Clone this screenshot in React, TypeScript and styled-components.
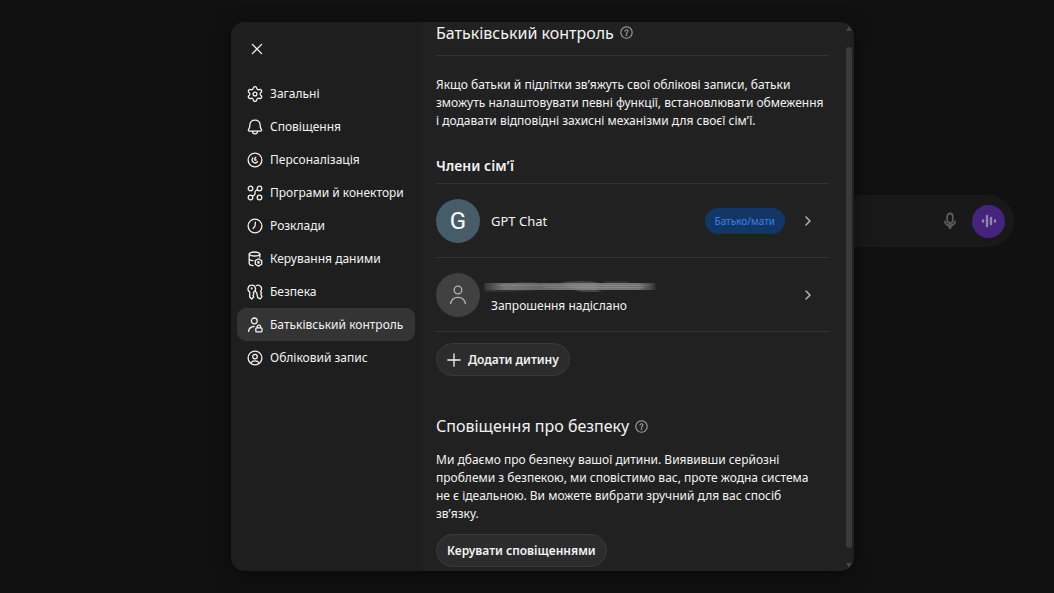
import React from "react";
import styled, { createGlobalStyle } from "styled-components";

const GlobalStyle = createGlobalStyle`
  *, *::before, *::after { box-sizing: border-box; }
  body {
    margin: 0;
    background: #111111;
    color: #f3f3f3;
    font-family: "Noto Sans", "Open Sans", sans-serif;
    font-size: 12px;
    line-height: 18px;
  }
  button { font: inherit; color: inherit; border: 0; background: none; padding: 0; cursor: pointer; }
  h1, h2, h3, p, ul { margin: 0; padding: 0; }
  ul { list-style: none; }
`;

const Page = styled.div`
  position: relative;
  min-height: 100vh;
  padding-top: 195px;
  overflow: hidden;
`;

const Composer = styled.div`
  display: flex;
  align-items: center;
  justify-content: flex-end;
  gap: 14px;
  width: 60%;
  height: 52px;
  margin: 0 40px 0 auto;
  padding-right: 9px;
  border-radius: 26px;
  background: #191919;
`;

const MicButton = styled.button`
  display: flex;
  color: #5c5c5c;
`;

const VoiceButton = styled.button`
  display: flex;
  align-items: center;
  justify-content: center;
  width: 33px;
  height: 33px;
  border-radius: 50%;
  background: #46237c;
  color: #9484ae;
`;

const Overlay = styled.div`
  position: absolute;
  inset: 0;
  display: flex;
  align-items: center;
  justify-content: center;
  padding: 22px 16px 22px 47px;
`;

const Dialog = styled.section`
  display: flex;
  width: 100%;
  max-width: 623px;
  height: 100%;
  border-radius: 14px;
  overflow: hidden;
  background: #212121;
  box-shadow: 0 4px 20px rgba(0, 0, 0, 0.5);
`;

const Sidebar = styled.nav`
  flex: 0 0 190px;
  padding: 17px 6px 0;
  background: #1e1e1e;
`;

const CloseButton = styled.button`
  display: flex;
  align-items: center;
  justify-content: center;
  width: 20px;
  height: 20px;
  margin: 0 0 18px 10px;
`;

const NavItem = styled.button<{ $active?: boolean }>`
  display: flex;
  align-items: center;
  gap: 7px;
  width: 100%;
  height: 33px;
  padding-left: 10px;
  border-radius: 9px;
  white-space: nowrap;
  text-align: left;
  background: ${(p) => (p.$active ? "#343434" : "transparent")};

  svg { flex: none; }
`;

const Content = styled.main`
  flex: 1;
  min-width: 0;
  padding: 0 17px 0 15px;
  overflow: hidden;
`;

const TitleRow = styled.header<{ $ruled?: boolean }>`
  display: flex;
  align-items: center;
  gap: 6px;
  height: ${(p) => (p.$ruled ? "34px" : "24px")};
  padding-bottom: ${(p) => (p.$ruled ? "12px" : "0")};
  border-bottom: ${(p) => (p.$ruled ? "1px solid #333333" : "0")};
`;

const Title = styled.h2`
  font-size: 16px;
  line-height: 22px;
  font-weight: 400;
`;

const HelpButton = styled.button`
  display: flex;
  color: #a6a6a6;
`;

const Paragraph = styled.p<{ $top: number }>`
  margin-top: ${(p) => p.$top}px;
`;

const SubTitle = styled.h3`
  margin-top: 26px;
  padding-bottom: 7px;
  border-bottom: 1px solid #333333;
  font-size: 14px;
  line-height: 20px;
  font-weight: 600;
`;

const Member = styled.li`
  border-bottom: 1px solid #333333;
`;

const MemberButton = styled.button`
  display: flex;
  align-items: center;
  width: 100%;
  height: 73px;
  padding-right: 17px;
  text-align: left;
`;

const Avatar = styled.span<{ $color: string }>`
  display: flex;
  flex: none;
  align-items: center;
  justify-content: center;
  width: 44px;
  height: 44px;
  margin-right: 11px;
  border-radius: 50%;
  background: ${(p) => p.$color};
  color: #ffffff;
  font-family: Roboto, sans-serif;
  font-size: 24px;
`;

const MemberText = styled.span`
  display: flex;
  flex: 1;
  flex-direction: column;
`;

const MemberName = styled.span`
  font-size: 13px;
`;

const Redacted = styled.svg`
  margin: 5px 0 3px -7px;
`;

const Badge = styled.span`
  padding: 4px 10px;
  margin-right: 19px;
  border-radius: 13px;
  background: #123665;
  color: #3284f0;
  font-size: 10px;
`;

const PillButton = styled.button`
  display: inline-flex;
  align-items: center;
  gap: 7px;
  height: 33px;
  margin-top: 11px;
  padding: 0 10px;
  border: 1px solid #3b3b3b;
  border-radius: 17px;
  background: #2c2c2c;
  font-weight: 600;
`;

const SafetySection = styled.section`
  margin-top: 38px;
`;

const ScrollTrack = styled.div`
  display: flex;
  flex: 0 0 8px;
  flex-direction: column;
  align-items: center;
  padding: 4px 2px 3px 0;
  color: #444444;

  svg { flex: none; }
`;

const ScrollThumb = styled.div`
  flex: 1;
  width: 6px;
  margin: 16px 0 15px;
  border-radius: 3px;
  background: #3a3a3a;
`;

const Icon = ({ size = 16, children }: { size?: number; children: React.ReactNode }) => (
  <svg width={size} height={size} viewBox="0 0 16 16" fill="none" stroke="currentColor"
    strokeWidth="1.300" strokeLinecap="round" strokeLinejoin="round" aria-hidden="true">
    {children}
  </svg>
);

const navItems: { label: string; active?: boolean; icon: React.ReactNode }[] = [
  {
    label: "Загальні",
    icon: (
      <>
        <g transform="translate(-0.880 -0.880) scale(0.740)" strokeWidth="1.750">
          <path d="M9.671 4.136a2.34 2.34 0 0 1 4.659 0 2.34 2.34 0 0 0 3.319 1.915 2.34 2.34 0 0 1 2.33 4.033 2.34 2.34 0 0 0 0 3.831 2.34 2.34 0 0 1-2.33 4.033 2.34 2.34 0 0 0-3.319 1.915 2.34 2.34 0 0 1-4.659 0 2.34 2.34 0 0 0-3.32-1.915 2.34 2.34 0 0 1-2.33-4.033 2.34 2.34 0 0 0 0-3.831A2.34 2.34 0 0 1 6.35 6.051a2.34 2.34 0 0 0 3.319-1.915" />
          <circle cx="12" cy="12" r="2.600" />
        </g>
      </>
    ),
  },
  {
    label: "Сповіщення",
    icon: (
      <>
        <path d="M8 1.200C4.900 1.200 3 3.300 2.800 6.200L2.600 8.400L1.500 10.700Q1 12.100 2.400 12.100H13.600Q15 12.100 14.500 10.700L13.400 8.400L13.200 6.200C13 3.300 11.100 1.200 8 1.200Z" />
        <path d="M5.300 12.400Q5.700 14.800 8 14.800T10.700 12.400" />
      </>
    ),
  },
  {
    label: "Персоналізація",
    icon: (
      <>
        <circle cx="8" cy="8" r="6.900" />
        <path d="M5.800 6A3 3 0 1 0 10.600 9.600" />
        <path d="M8.800 5.200Q7.200 6.400 7.900 8H9.200" />
      </>
    ),
  },
  {
    label: "Програми й конектори",
    icon: (
      <>
        <circle cx="3.500" cy="3.500" r="2.300" />
        <circle cx="12.500" cy="3.500" r="2.300" />
        <circle cx="3.500" cy="12.500" r="2.300" />
        <circle cx="12.500" cy="12.500" r="2.300" />
        <path d="M10.500 4.800L8.700 5.800Q8 6.200 8 7V8.800Q8 9.600 7.300 10L5.500 11.200" />
      </>
    ),
  },
  {
    label: "Розклади",
    icon: (
      <>
        <circle cx="8" cy="8" r="6.900" />
        <path d="M8.400 4.200L8 8.200L6.100 10.500" />
      </>
    ),
  },
  {
    label: "Керування даними",
    icon: (
      <>
        <ellipse cx="7.500" cy="3" rx="5.300" ry="2" />
        <path d="M2.200 3V12.700Q2.600 14.400 6 14.700M2.200 7.900Q2.800 9.400 6 9.700M12.800 3V6.300" />
        <path d="M11.500 7.800L14.700 9.600V13.300L11.500 15.100L8.300 13.300V9.600Z" />
        <circle cx="11.500" cy="11.450" r="0.700" />
      </>
    ),
  },
  {
    label: "Безпека",
    icon: (
      <>
        <path d="M4.700 1.200A3.700 3.700 0 0 0 2.700 8V13L4.700 15L6.700 13L5.900 11.500L6.900 10L6.300 8.300A3.700 3.700 0 0 0 4.700 1.200Z" />
        <circle cx="4.700" cy="4.400" r="0.400" />
        <path d="M9.300 1.500A3.700 3.700 0 0 1 13.500 7.400L14.600 8.600L13.800 10.200L14.900 12.600L13.300 14.800L10.700 13.600L9.700 8.700Q8.200 7.800 8.300 6" />
      </>
    ),
  },
  {
    label: "Батьківський контроль",
    active: true,
    icon: (
      <>
        <circle cx="7.300" cy="3.900" r="2.900" />
        <path d="M1.500 14.400Q2.200 9.700 7 9.500" />
        <rect x="8.800" y="10.900" width="6.200" height="4" rx="0.900" />
        <path d="M10.200 10.700V9.900A1.700 1.700 0 0 1 13.600 9.900V10.700" />
      </>
    ),
  },
  {
    label: "Обліковий запис",
    icon: (
      <>
        <circle cx="8" cy="8" r="6.900" />
        <circle cx="8" cy="6.600" r="2.300" />
        <path d="M3.900 13Q5.100 10.900 8 10.900T12.100 13" />
      </>
    ),
  },
];

const Help = ({ label }: { label: string }) => (
  <HelpButton aria-label={label}>
    <Icon size={13}>
      <circle cx="8" cy="8" r="7" />
      <path d="M6.100 6.300Q6.300 4.700 8 4.700T9.900 6.300Q9.900 7.200 8.900 7.800Q8 8.300 8 9.200" />
      <circle cx="8" cy="11.300" r="0.400" />
    </Icon>
  </HelpButton>
);

const Chevron = () => (
  <svg width="8" height="12" viewBox="0 0 8 12" fill="none" stroke="#b4b4b4" strokeWidth="1.500"
    strokeLinecap="round" strokeLinejoin="round" aria-hidden="true">
    <path d="M2 2L6 6L2 10" />
  </svg>
);

export default function App() {
  return (
    <>
      <GlobalStyle />
      <Page>
        <Composer>
          <MicButton aria-label="Диктування">
            <svg width="16" height="18" viewBox="0 0 16 18" fill="none" stroke="currentColor" strokeWidth="1.800" strokeLinecap="round">
              <rect x="5.200" y="1.500" width="5.600" height="9.500" rx="2.800" />
              <path d="M2.800 9.500Q3.800 13.500 8 13.500T13.200 9.500" />
              <path d="M8 14V15.600" strokeWidth="3" />
            </svg>
          </MicButton>
          <VoiceButton aria-label="Голосовий режим">
            <svg width="16" height="14" viewBox="0 0 16 14" stroke="currentColor" strokeWidth="2.400" strokeLinecap="round">
              <path d="M2 6.500V7.500M6 2V12M10 4V10M14 6.500V7.500" />
            </svg>
          </VoiceButton>
        </Composer>

        <Overlay>
          <Dialog role="dialog" aria-label="Налаштування">
            <Sidebar>
              <CloseButton aria-label="Закрити">
                <svg width="12" height="12" viewBox="0 0 12 12" stroke="currentColor" strokeWidth="1.300" strokeLinecap="round">
                  <path d="M1.400 1.400L10.600 10.600M10.600 1.400L1.400 10.600" />
                </svg>
              </CloseButton>
              {navItems.map((item) => (
                <NavItem key={item.label} $active={item.active}>
                  <Icon>{item.icon}</Icon>
                  {item.label}
                </NavItem>
              ))}
            </Sidebar>

            <Content>
              <TitleRow $ruled>
                <Title>Батьківський контроль</Title>
                <Help label="Довідка про батьківський контроль" />
              </TitleRow>
              <Paragraph $top={20}>
                Якщо батьки й підлітки зв’яжуть свої облікові записи, батьки зможуть налаштовувати
                певні функції, встановлювати обмеження і&nbsp;додавати відповідні захисні механізми для
                своєї сім’ї.
              </Paragraph>

              <SubTitle>Члени сім’ї</SubTitle>
              <ul>
                <Member>
                  <MemberButton>
                    <Avatar $color="#475c69">G</Avatar>
                    <MemberText>
                      <MemberName>GPT Chat</MemberName>
                    </MemberText>
                    <Badge>Батько/мати</Badge>
                    <Chevron />
                  </MemberButton>
                </Member>
                <Member>
                  <MemberButton>
                    <Avatar $color="#414141">
                      <svg width="18" height="20" viewBox="0 0 18 20" fill="none" stroke="#b4b4b4" strokeWidth="1.300" strokeLinecap="round">
                        <circle cx="9" cy="5" r="3.800" />
                        <path d="M1.600 18.600Q2.800 12.300 9 12.300T16.400 18.600" />
                      </svg>
                    </Avatar>
                    <MemberText>
                      <Redacted width="172" height="14" viewBox="0 0 172 14" aria-hidden="true">
                        <defs>
                          <linearGradient id="smear">
                            <stop offset="0" stopColor="#3c3c3c" />
                            <stop offset="0.120" stopColor="#8a8a8a" />
                            <stop offset="0.300" stopColor="#777777" />
                            <stop offset="0.600" stopColor="#8f8f8f" />
                            <stop offset="0.900" stopColor="#8a8a8a" />
                            <stop offset="1" stopColor="#3c3c3c" />
                          </linearGradient>
                          <filter id="soften" x="-5%" y="-20%" width="110%" height="140%">
                            <feGaussianBlur stdDeviation="1.500 0.400" />
                          </filter>
                        </defs>
                        <g filter="url(#soften)">
                          <path d="M33 2H54V10L22 12H0V10H22ZM121 1H145V4H121Z" fill="#333333" />
                          <path d="M78 2Q100 0 113 2V10L119 12H98L90 10Z" fill="#444444" />
                          <rect y="3" width="171" height="7" fill="url(#smear)" opacity="0.800" />
                          <path d="M14 5.500H165M60 7.500H160" stroke="#a6a6a6" strokeWidth="1" opacity="0.300" />
                        </g>
                      </Redacted>
                      <span>Запрошення надіслано</span>
                    </MemberText>
                    <Chevron />
                  </MemberButton>
                </Member>
              </ul>
              <PillButton>
                <svg width="14" height="14" viewBox="0 0 14 14" stroke="currentColor" strokeWidth="1.300" strokeLinecap="round" aria-hidden="true">
                  <path d="M7 0.800V13.200M0.800 7H13.200" />
                </svg>
                Додати дитину
              </PillButton>

              <SafetySection>
                <TitleRow>
                  <Title>Сповіщення про безпеку</Title>
                  <Help label="Довідка про сповіщення" />
                </TitleRow>
                <Paragraph $top={13}>
                  Ми дбаємо про безпеку вашої дитини. Виявивши серйозні проблеми з безпекою, ми
                  сповістимо вас, проте жодна система не&nbsp;є&nbsp;ідеальною. Ви можете вибрати
                  зручний для вас спосіб
                  <br />
                  зв’язку.
                </Paragraph>
                <PillButton>Керувати сповіщеннями</PillButton>
              </SafetySection>
            </Content>

            <ScrollTrack aria-hidden="true">
              <svg width="6" height="5" viewBox="0 0 6 5" fill="currentColor"><path d="M3 0L6 5H0Z" /></svg>
              <ScrollThumb />
              <svg width="6" height="5" viewBox="0 0 6 5" fill="currentColor"><path d="M0 0H6L3 5Z" /></svg>
            </ScrollTrack>
          </Dialog>
        </Overlay>
      </Page>
    </>
  );
}
